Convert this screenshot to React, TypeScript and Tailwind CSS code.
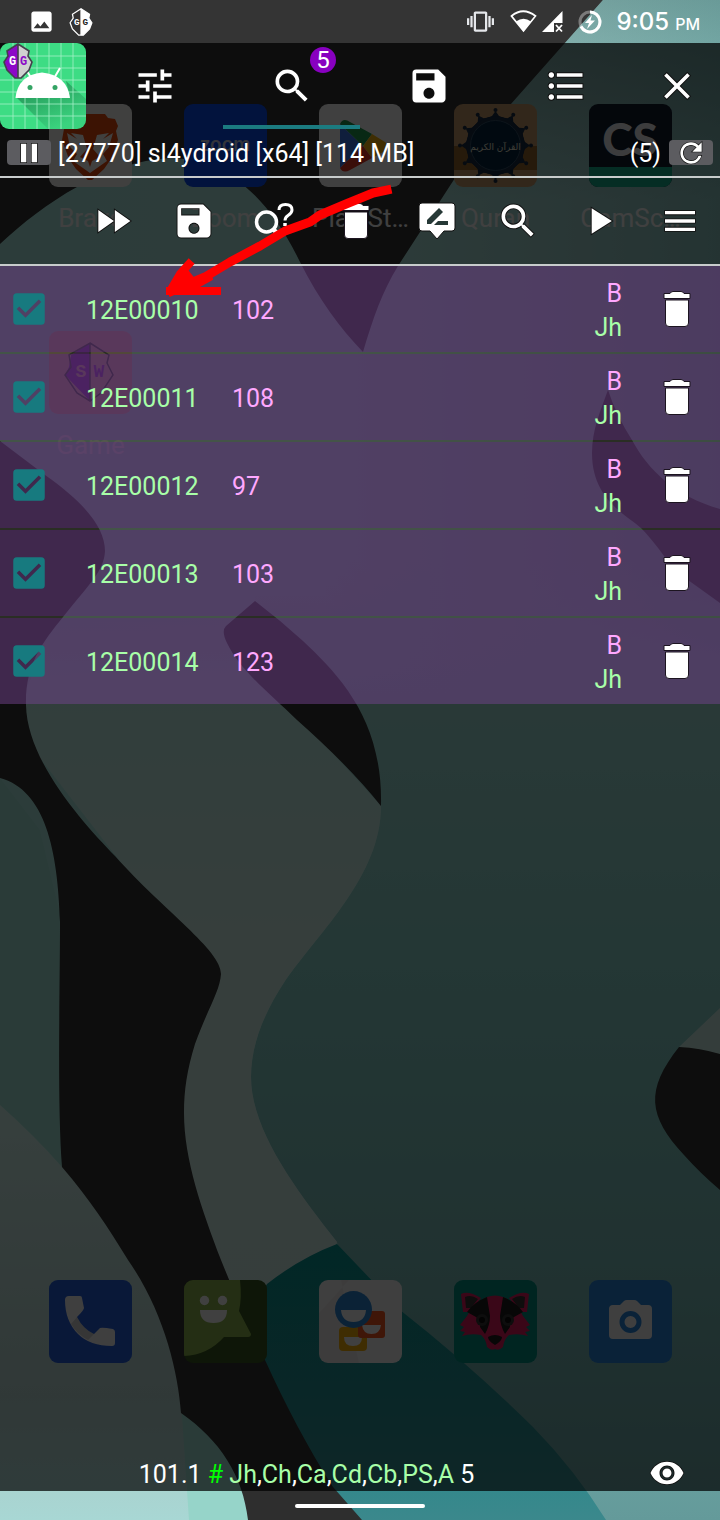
import React from "react";
import type { IconType } from "react-icons";
import {
  MdCheckBox,
  MdClose,
  MdFastForward,
  MdFormatListBulleted,
  MdImage,
  MdMenu,
  MdPause,
  MdPlayArrow,
  MdRefresh,
  MdSave,
  MdSearch,
  MdTune,
  MdVibration,
  MdVisibility,
} from "react-icons/md";

/* ---------- Wallpaper ---------- */

function Wallpaper() {
  return (
    <svg
      className="absolute inset-0 h-full w-full"
      viewBox="0 0 720 1520"
      preserveAspectRatio="none"
      aria-hidden="true"
    >
      <defs>
        <linearGradient id="right" gradientUnits="userSpaceOnUse" x1="0" y1="560" x2="0" y2="1520">
          <stop offset="0" stopColor="#a4e4dc" stopOpacity="0" />
          <stop offset="0.14" stopColor="#a4e4dc" />
          <stop offset="0.45" stopColor="#8cd8d0" />
          <stop offset="0.75" stopColor="#80c4c0" />
          <stop offset="1" stopColor="#70acac" />
        </linearGradient>
        <linearGradient id="mid" gradientUnits="userSpaceOnUse" x1="0" y1="600" x2="0" y2="1330">
          <stop offset="0" stopColor="#c0f8f0" stopOpacity="0" />
          <stop offset="0.14" stopColor="#c4f8f0" />
          <stop offset="0.5" stopColor="#d8f8f0" />
          <stop offset="1" stopColor="#d8f4f0" />
        </linearGradient>
        <linearGradient id="topfield" x1="0" y1="0" x2="1" y2="0">
          <stop offset="0" stopColor="#b0f0e8" />
          <stop offset="0.45" stopColor="#b4f0e8" />
          <stop offset="0.8" stopColor="#a4d8d4" />
          <stop offset="1" stopColor="#90ccc8" />
        </linearGradient>
        <linearGradient id="topshade" x1="0" y1="0" x2="0" y2="1">
          <stop offset="0" stopColor="#305050" stopOpacity="0.4" />
          <stop offset="1" stopColor="#305050" stopOpacity="0" />
        </linearGradient>
        <linearGradient id="lowleft" x1="0" y1="0" x2="0" y2="1">
          <stop offset="0" stopColor="#d8fcf4" />
          <stop offset="0.7" stopColor="#c0e0dc" />
          <stop offset="1" stopColor="#bcf0ec" />
        </linearGradient>
        <linearGradient id="deep" x1="0" y1="0" x2="0" y2="1">
          <stop offset="0" stopColor="#069a98" />
          <stop offset="1" stopColor="#42989c" />
        </linearGradient>
      </defs>
      <rect width="720" height="1520" fill="#343434" />
      <path
        d="M0 244C45 202 105 162 170 158C225 158 268 196 300 262C319 300 340 328 363 352C373 318 382 292 398 266L455 178C474 148 492 126 511 104L603 0H720V1520H0Z"
        fill="url(#topfield)"
      />
      <path d="M603 0H720V200H440L455 178C474 148 492 126 511 104Z" fill="url(#topshade)" />
      <path
        d="M255 560V601C300 636 381 705 381 806C381 875 321 930 285 981C262 1016 251 1047 251 1077C251 1130 296 1190 337 1242L400 1520H720V560Z"
        fill="url(#right)"
      />
      <path
        d="M26 690L63 600H255L317 736L381 806C381 875 321 930 285 981C262 1016 251 1047 251 1077C251 1130 296 1190 337 1242L300 1330H150V900L26 740Z"
        fill="url(#mid)"
      />
      <path d="M0 778L40 830L62 922V1180L0 1110Z" fill="#a8ece0" />
      <path d="M0 1105Q34 1135 62 1167L150 1240L230 1413V1520H0Z" fill="url(#lowleft)" />
      <path d="M181 1400L189 1520H260L220 1400Z" fill="#a8ece0" />
      <path
        d="M337 1244Q300 1258 267 1284L240 1330L320 1520H606Q575 1470 533 1427Q470 1365 400 1310Z"
        fill="url(#deep)"
      />
      <path
        d="M0 441L45 475C85 503 105 528 105 551C104 571 90 583 63 617C42 643 25 665 26 705C27 762 85 825 115 856C165 912 221 950 221 974C220 991 208 1008 195 1044C187 1070 184 1090 184 1113C184 1160 202 1210 221 1260C234 1292 248 1326 265 1360C285 1404 308 1448 333 1487L362 1520H248C243 1476 220 1440 181 1413C178 1370 163 1310 128 1260C108 1227 90 1200 62 1167C57 1100 60 990 60 922C58 850 45 790 0 778Z"
        fill="#343434"
      />
      <path
        d="M255 601L226 626Q221 631 227 643C240 670 268 692 297 720Q350 767 381 806C383 720 340 676 303 641Q280 620 255 601Z"
        fill="#343434"
      />
      <path
        d="M608 390C600 412 592 430 592 453C592 500 627 515 641 528C665 553 670 570 688 580L720 603V509C675 496 648 470 632 440Q616 415 608 390Z"
        fill="#343434"
      />
      <path d="M720 1008L679 1047L720 1056Z" fill="#d0f4ec" />
      <path d="M679 1047C645 1090 648 1116 684 1155Q700 1173 720 1190V1054Q700 1048 679 1047Z" fill="#343434" />
    </svg>
  );
}

/* ---------- Launcher icons ---------- */

function Tile({ bg, children }: { bg: string; children?: React.ReactNode }) {
  return (
    <svg className="size-[83px] shrink-0" viewBox="0 0 83 83" aria-hidden="true">
      <defs>
        <clipPath id={"tile" + bg.slice(1)}>
          <rect width="83" height="83" rx="9" />
        </clipPath>
      </defs>
      <g clipPath={`url(#tile${bg.slice(1)})`}>
        <rect width="83" height="83" fill={bg} />
        {children}
      </g>
    </svg>
  );
}

const BraveIcon = () => (
  <Tile bg="#fdfdfc">
    <path
      d="M26 10H56L59 14L66 15L69 22L67 27L69 36L62 55L55 65L43 76H39L27 65L20 55L13 36L15 25L19 17Z"
      fill="#f04c0c"
    />
    <path
      d="M22 29L34 31L38 45L31 53L39 57L41 63L43 57L51 53L44 45L48 31L60 29L54 35L64 29L60 43L54 50L58 57L41 69L24 57L28 50L21 43L18 29L28 35Z"
      fill="#fdfdfc"
    />
  </Tile>
);

const ZoomIcon = () => (
  <Tile bg="#0a4cf4">
    <text x="41" y="47" textAnchor="middle" fontFamily="Inter, sans-serif" fontWeight="600" fontSize="19" fill="#c8d0e8">
      zoom
    </text>
  </Tile>
);

const PlayStoreIcon = () => (
  <Tile bg="#fefefe">
    <path d="M21 20V64L44 42Z" fill="#3c78f0" />
    <path d="M21 20Q24 13 31 18L53 30L44 42Z" fill="#20a050" />
    <path d="M53 30L66 38Q71 42 66 47L53 54L44 42Z" fill="#fcb80c" />
    <path d="M21 64Q24 70 31 66L53 54L44 42Z" fill="#e83828" />
  </Tile>
);

const QuranIcon = () => (
  <Tile bg="#c89c6c">
    <rect y="42" width="83" height="24" fill="#98682c" />
    {[0, 30, 60, 90, 120, 150, 180, 210, 240, 270, 300, 330].map((a) => (
      <g key={a} transform={`rotate(${a} 41.5 41.5)`}>
        <path d="M30 15L38 12L41.5 7L45 12L53 15L49 24H34Z" fill="#182c44" />
        <circle cx="41.5" cy="6" r="2" fill="#182c44" />
      </g>
    ))}
    <circle cx="41.5" cy="41.5" r="29" fill="#182c44" />
    <circle cx="41.5" cy="41.5" r="25" fill="#042440" stroke="#345068" strokeWidth="1" />
    <text x="41.5" y="46" textAnchor="middle" fontFamily="'DejaVu Sans', sans-serif" fontSize="9" fill="#f0ecd8">
      القرآن الكريم
    </text>
  </Tile>
);

const ScannerIcon = () => (
  <Tile bg="#101c2c">
    <rect y="63" width="83" height="20" fill="#14b490" />
    <text x="41" y="52" textAnchor="middle" fontFamily="Lato, sans-serif" fontWeight="900" fontSize="46" fill="#f0f0f4">
      CS
    </text>
  </Tile>
);

const GuardIcon = () => (
  <Tile bg="#fcb4a4">
    <path d="M41 12L22 24L20 36L16 44L41 70Z" fill="#8804d0" />
    <path
      d="M41 12L60 24L58 32L64 44L52 62L41 70L28 62L16 44L22 36L20 24ZM41 12V70"
      fill="none"
      stroke="#30302c"
      strokeWidth="1.5"
    />
    <text x="32" y="46" textAnchor="middle" fontFamily="'Liberation Mono', monospace" fontWeight="700" fontSize="18" fill="#fcb4a4">
      S
    </text>
    <text x="50" y="46" textAnchor="middle" fontFamily="'Liberation Mono', monospace" fontWeight="700" fontSize="18" fill="#8804d0">
      W
    </text>
  </Tile>
);

const PhoneIcon = () => (
  <Tile bg="#347cfc">
    <rect width="83" height="83" fill="#0c2cac" fillOpacity="0.35" />
    <path
      d="M20 16H31Q33 16 33 18L35 28Q35 30 28 37Q34 49 45 54L51 48Q53 47 64 49Q66 50 66 52V63Q66 66 63 66Q41 66 29 54Q16 41 16 20Q16 16 20 16Z"
      fill="#fcfcfc"
    />
    <path d="M22 44L28 37Q34 49 45 54L39 60Q28 54 22 44Z" fill="#000" fillOpacity="0.15" />
  </Tile>
);

const MessageIcon = () => (
  <Tile bg="#385820">
    <path d="M0 0H56Q58 18 55 31L67 54Q67 57 64 57H40Q24 75 0 76Z" fill="#90b850" />
    <circle cx="20.500" cy="20.500" r="4.700" fill="#fff" />
    <circle cx="38.500" cy="20.500" r="4.700" fill="#fff" />
    <path d="M16 30H43Q43 43 29.500 43Q16 43 16 30Z" fill="#fff" />
  </Tile>
);

const PeopleIcon = () => (
  <Tile bg="#fcfafa">
    <path d="M0 33L30 0H22L40 83H0Z" fill="#000" fillOpacity="0.04" />
    <rect x="20" y="47" width="28" height="24" rx="4" fill="#fcb408" />
    <path d="M25 57H43Q43 66 34 66Q25 66 25 57Z" fill="#fff" />
    <rect x="39" y="31" width="27" height="27" rx="3" fill="#fc5820" />
    <path d="M43 45H62Q61 54 52.500 54Q44 54 43 45Z" fill="#fff" />
    <circle cx="34.500" cy="29.500" r="18.500" fill="#2c88d8" />
    <path d="M22 30H47Q46 42 34.500 42Q23 42 22 30Z" fill="#fff" />
  </Tile>
);

const BadgerIcon = () => (
  <Tile bg="#009484">
    <path d="M7 14Q14 10 27 18L16 32H9Z M75 14Q68 10 55 18L66 32H73Z" fill="#e81c60" />
    <path d="M11 17Q17 14 24 19L17 28H12Z M71 17Q65 14 58 19L65 28H70Z" fill="#383434" />
    <path
      d="M33 17Q41 14 49 17Q64 24 69 36L76 45L72 47L76 51L71 52L74 56Q65 53 55 55Q50 59 49 67Q45 71 41 69Q37 71 33 67Q32 59 27 55Q17 53 8 56L11 52L6 51L10 47L6 45L13 36Q18 24 33 17Z"
      fill="#e81c60"
    />
    <path
      d="M33 17Q20 22 13 32L22 37Q27 40 26 47L31 54Q36 45 36 36Z M49 17Q62 22 69 32L60 37Q55 40 56 47L51 54Q46 45 46 36Z"
      fill="#1c1c1c"
    />
    <circle cx="28" cy="40" r="6" fill="#343434" />
    <circle cx="54" cy="40" r="6" fill="#343434" />
    <circle cx="28" cy="40" r="3" fill="#0c0c0c" />
    <circle cx="54" cy="40" r="3" fill="#0c0c0c" />
    <path d="M34 57Q41 53 48 57Q48 61 41 65Q34 61 34 57Z" fill="#1c1c1c" />
  </Tile>
);

const CameraIcon = () => (
  <Tile bg="#2888e0">
    <path
      d="M24 25H31L35 21Q36 20 38 20H45Q47 20 48 21L52 25H59Q63 25 63 29V55Q63 59 59 59H24Q20 59 20 55V29Q20 25 24 25Z"
      fill="#fcfcfc"
    />
    <circle cx="41.500" cy="42" r="8.500" fill="none" stroke="#2888e0" strokeWidth="5" />
  </Tile>
);

const apps = [
  { label: "Brave", Icon: BraveIcon },
  { label: "Zoom", Icon: ZoomIcon },
  { label: "Play St…", Icon: PlayStoreIcon },
  { label: "Quran", Icon: QuranIcon },
  { label: "CamSc…", Icon: ScannerIcon },
  { label: "Game", Icon: GuardIcon },
];

const dock = [PhoneIcon, MessageIcon, PeopleIcon, BadgerIcon, CameraIcon];

function HomeScreen() {
  return (
    <div className="absolute inset-0 flex flex-col justify-between pt-[104px] pr-[22px] pb-[157px] pl-[23px]">
      <div className="grid grid-cols-5 gap-y-[97px]">
        {apps.map(({ label, Icon }) => (
          <div key={label} className="flex h-[130px] flex-col items-center justify-between">
            <Icon />
            <span className="text-[26px] leading-8 whitespace-nowrap text-white">{label}</span>
          </div>
        ))}
      </div>
      <div className="grid grid-cols-5 justify-items-center">
        {dock.map((Icon, i) => (
          <Icon key={i} />
        ))}
      </div>
    </div>
  );
}

/* ---------- Tool icons ---------- */

const outlined =
  "[stroke-width:0] [&_path:not([fill=none])]:[paint-order:stroke] [&_path:not([fill=none])]:stroke-[#111] [&_path:not([fill=none])]:[stroke-width:1]";

function TrashIcon() {
  return (
    <svg className="h-9 w-7 overflow-visible" viewBox="0 0 28 36" aria-hidden="true">
      <path
        d="M7 2.500Q8 0.500 10 0.500H18Q20 0.500 21 2.500H27V7.500H1V2.500Z M2.500 9H25.500V32Q25.500 35.500 22 35.500H6Q2.500 35.500 2.500 32Z"
        fill="#fff"
        stroke="#1c1420"
        strokeWidth="1"
      />
    </svg>
  );
}

function UnknownSearchIcon() {
  return (
    <svg className="size-10 overflow-visible" viewBox="0 0 40 40" fill="none" stroke="#fff" aria-hidden="true">
      <circle cx="11.500" cy="21" r="10" strokeWidth="3.500" />
      <path d="M18 28L25 35" strokeWidth="4.500" />
      <path d="M24 9Q24 3.500 30.500 3.500Q37 3.500 37 9Q37 12 33 14.500Q30 16.500 30 19.500" strokeWidth="3" />
      <path d="M30 22V25" strokeWidth="3.500" />
    </svg>
  );
}

function EditValueIcon() {
  return (
    <svg className="h-9 w-9 overflow-visible" viewBox="0 0 36 36" aria-hidden="true">
      <path
        d="M3 0H33Q36 0 36 3V25Q36 28 33 28H25L18 36L11 28H3Q0 28 0 25V3Q0 0 3 0Z"
        fill="#fff"
        stroke="#111"
        strokeWidth="1"
      />
      <path d="M8 21V17L20 5L24 9L12 21Z" fill="#263836" />
      <path d="M15 22L19 18H29V22Z" fill="#263836" />
    </svg>
  );
}

function GuardianMark({ tone }: { tone: "mono" | "colour" }) {
  const mono = tone === "mono";
  return (
    <svg className={mono ? "h-7 w-6" : "absolute top-0 left-0.5 h-9 w-8"} viewBox="0 0 30 36" aria-hidden="true">
      <path d="M15 1L4 8L5 13L1 19L4 27L12 35H15Z" fill={mono ? "#343232" : "#8c08c8"} />
      <path d="M15 1L26 8L25 13L29 19L26 27L18 35H15Z" fill={mono ? "#fff" : "#d0d0d0"} />
      <path
        d="M15 1L4 8L5 13L1 19L4 27L12 35H18L26 27L29 19L25 13L26 8ZM15 1V35"
        fill="none"
        stroke={mono ? "#fff" : "#44404c"}
        strokeWidth="1.600"
      />
      <text x="9.500" y="22" textAnchor="middle" fontFamily="'Liberation Mono', monospace" fontWeight="700" fontSize="12" fill="#fff">
        G
      </text>
      <text x="20.500" y="22" textAnchor="middle" fontFamily="'Liberation Mono', monospace" fontWeight="700" fontSize="12" fill={mono ? "#222" : "#8c08c8"}>
        G
      </text>
    </svg>
  );
}

function TargetAppIcon() {
  return (
    <svg className="size-[86px]" viewBox="0 0 86 86" aria-hidden="true">
      <defs>
        <clipPath id="appclip">
          <rect width="86" height="86" rx="9" />
        </clipPath>
        <linearGradient id="shadow" x1="0.2" y1="0.1" x2="0.7" y2="0.9">
          <stop offset="0" stopColor="#1c7c48" stopOpacity="0.7" />
          <stop offset="1" stopColor="#1c7c48" stopOpacity="0.1" />
        </linearGradient>
      </defs>
      <g clipPath="url(#appclip)">
        <rect width="86" height="86" fill="#3ddc84" />
        <path d="M16 54L48 86H86V56L66 38L70 54Z" fill="url(#shadow)" />
        <path
          d="M13 0V86M25 0V86M37 0V86M49 0V86M61 0V86M73 0V86M0 13H86M0 25H86M0 37H86M0 49H86M0 61H86M0 73H86"
          stroke="#a4f0c8"
          strokeWidth="0.800"
        />
        <path d="M27 28L33 38M60 25L53 37" stroke="#fff" strokeWidth="2" />
        <path d="M15.500 55Q18 32 42 29.500Q67 32 70 55Z" fill="#fff" />
        <circle cx="30" cy="44.500" r="2.500" fill="#34a464" />
        <circle cx="55" cy="44.500" r="2.500" fill="#34a464" />
      </g>
    </svg>
  );
}

/* ---------- Status bar ---------- */

function StatusBar() {
  return (
    <header className="relative flex h-[43px] items-center justify-between pr-5 pl-7 text-white">
      <div className="flex items-center gap-3.5">
        <MdImage className="size-[27px]" />
        <GuardianMark tone="mono" />
      </div>
      <div className="flex items-center">
        <MdVibration className="mr-4 size-[27px] text-gray-200" />
        <svg className="mr-1 h-[23px] w-[27px]" viewBox="0 0 27 23" aria-hidden="true">
          <path d="M1.500 6Q13 -3.500 25.500 6L13.500 21Z" fill="none" stroke="#fff" strokeWidth="1.700" />
          <path d="M6 11.500Q13.500 6 21 11.500L13.500 21.500Z" fill="#fff" />
        </svg>
        <svg className="mr-3.5 h-[23px] w-[23px]" viewBox="0 0 23 23" aria-hidden="true">
          <path d="M21.500 1V13H13V22H1Z" fill="#fff" />
          <path d="M15 15L21 21.500M21 15L15 21.500" stroke="#fff" strokeWidth="1.800" />
        </svg>
        <svg className="mr-3.5 size-6" viewBox="0 0 24 24" aria-hidden="true">
          <circle cx="12" cy="12" r="10" fill="none" stroke="#fff" strokeOpacity="0.35" strokeWidth="3" />
          <path d="M12 2A10 10 0 1 1 3 16.500" fill="none" stroke="#fff" strokeWidth="3" />
          <path d="M14 5L7 13H11L9 19L17 10.500H12.500Z" fill="#fff" />
        </svg>
        <p className="flex items-baseline gap-1.5 font-[Inter,sans-serif] font-medium">
          <span className="text-2xl leading-7">9:05</span>
          <span className="text-base">PM</span>
        </p>
      </div>
    </header>
  );
}

/* ---------- Memory editor panel ---------- */

const tabs: { name: string; Icon: IconType }[] = [
  { name: "Settings", Icon: MdTune },
  { name: "Search", Icon: MdSearch },
  { name: "Saved list", Icon: MdSave },
  { name: "Memory editor", Icon: MdFormatListBulleted },
];

function TabBar() {
  return (
    <nav className="flex h-[86px] items-stretch">
      <div className="relative w-[86px] shrink-0">
        <TargetAppIcon />
        <GuardianMark tone="colour" />
      </div>
      {tabs.map(({ name, Icon }) => {
        const active = name === "Search";
        return (
          <button
            key={name}
            type="button"
            aria-label={name}
            className={
              active
                ? "relative flex flex-1 items-center justify-center border-y-4 border-t-transparent border-b-[#1b7b80]"
                : "flex flex-1 items-center justify-center"
            }
          >
            <Icon className={`size-11 ${outlined}`} />
            {active && (
              <span className="absolute top-0 right-6 flex h-[26px] w-[26px] items-center justify-center rounded-full bg-[#8800c0] text-2xl leading-none">
                5
              </span>
            )}
          </button>
        );
      })}
      <button type="button" aria-label="Close" className="flex w-[86px] items-center justify-center">
        <MdClose className={`size-11 ${outlined}`} />
      </button>
    </nav>
  );
}

function ProcessBar() {
  return (
    <div className="flex h-[49px] items-center border-b-2 border-[#c8cccc] px-[7px] text-[25px]">
      <button
        type="button"
        aria-label="Pause process"
        className="flex h-[25px] w-11 items-center justify-center rounded bg-[#5c5c60]"
      >
        <MdPause className={`size-8 ${outlined}`} />
      </button>
      <span className="ml-[7px] flex-1 pt-0.5 whitespace-nowrap">[27770] sl4ydroid [x64] [114 MB]</span>
      <span className="mr-2 pt-0.5">(5)</span>
      <button
        type="button"
        aria-label="Refresh"
        className="flex h-[25px] w-11 items-center justify-center rounded bg-[#5c5c60]"
      >
        <MdRefresh className={`size-8 ${outlined}`} />
      </button>
    </div>
  );
}

const tools: { name: string; icon: React.ReactNode }[] = [
  { name: "Next search", icon: <MdFastForward className={`size-11 ${outlined}`} /> },
  { name: "Save selected", icon: <MdSave className={`size-11 ${outlined}`} /> },
  { name: "Unknown value search", icon: <UnknownSearchIcon /> },
  { name: "Clear results", icon: <TrashIcon /> },
  { name: "Edit values", icon: <EditValueIcon /> },
  { name: "Search value", icon: <MdSearch className={`size-11 ${outlined}`} /> },
  { name: "Run script", icon: <MdPlayArrow className={`size-11 ${outlined}`} /> },
  { name: "Menu", icon: <MdMenu className={`size-10 ${outlined}`} /> },
];

function ToolBar() {
  return (
    <div className="grid h-[88px] grid-cols-8 border-b-2 border-[#c8cccc] pl-[72px]">
      {tools.map(({ name, icon }) => (
        <button key={name} type="button" aria-label={name} className="flex items-center justify-center">
          {icon}
        </button>
      ))}
    </div>
  );
}

const results = [
  { address: "12E00010", value: 102 },
  { address: "12E00011", value: 108 },
  { address: "12E00012", value: 97 },
  { address: "12E00013", value: 103 },
  { address: "12E00014", value: 123 },
];

function ResultRow({ address, value }: { address: string; value: number }) {
  const cell =
    "h-[88px] border-b-2 border-[#a0b480]/20 bg-[#73438d]/50 bg-clip-padding group-last:h-[86px] group-last:border-b-0";
  return (
    <tr className="group">
      <td className={`${cell} w-[86px] py-0 pr-0 pl-2`}>
        <label className="block w-[42px]">
          <input type="checkbox" defaultChecked className="sr-only" aria-label={`Select ${address}`} />
          <MdCheckBox className="size-[42px] text-[#177a7f]" />
        </label>
      </td>
      <td className={`${cell} w-[146px] px-0 pt-1 pb-0 text-[#a8ffa8]`}>{address}</td>
      <td className={`${cell} px-0 pt-1 pb-0 text-[#ffa8ff]`}>{value}</td>
      <td className={`${cell} px-0 pt-1 pb-0 text-right`}>
        <div className="text-[#ffa8ff]">B</div>
        <div className="text-[#a8ffa8]">Jh</div>
      </td>
      <td className={`${cell} w-[98px] py-0 pr-0 pl-3`}>
        <button type="button" aria-label={`Delete ${address}`} className="flex w-full items-center justify-center">
          <TrashIcon />
        </button>
      </td>
    </tr>
  );
}

const regions = ["Jh", "Ch", "Ca", "Cd", "Cb", "PS", "A"];

function Footer() {
  return (
    <footer className="mt-auto flex h-9 items-center">
      <p className="flex-1 pt-1 text-center text-[25px] leading-9 whitespace-nowrap">
        101.1 <span className="text-[#00ff00]">#</span>{" "}
        {regions.map((r, i) => (
          <React.Fragment key={r}>
            {i > 0 && ","}
            <span className="text-[#a8ffa8]">{r}</span>
          </React.Fragment>
        ))}{" "}
        5
      </p>
      <button type="button" aria-label="Toggle visibility" className="flex w-[107px] items-center justify-center">
        <MdVisibility className={`size-9 ${outlined}`} />
      </button>
    </footer>
  );
}

function Arrow() {
  return (
    <svg
      className="pointer-events-none absolute top-[180px] left-[160px] h-[125px] w-[236px]"
      viewBox="0 0 236 125"
      fill="none"
      stroke="#f00"
      strokeLinecap="square"
      strokeLinejoin="round"
      aria-hidden="true"
    >
      <path d="M227 10L213 13L186 24L160 35L150 42L125 51L100 66L70 82L45 97L12 111" strokeWidth="9" />
      <path d="M29 84L20 94L10 111L30 108L48 98M10 111H57" strokeWidth="8" />
      <path d="M12 108L26 92L34 102Z" strokeWidth="6" fill="#f00" />
    </svg>
  );
}

export default function App() {
  return (
    <div className="relative flex min-h-screen flex-col overflow-hidden font-[Roboto,sans-serif]">
      <Wallpaper />
      <HomeScreen />
      <StatusBar />
      <main className="relative flex flex-1 flex-col bg-black/75 text-white">
        <TabBar />
        <ProcessBar />
        <ToolBar />
        <table className="w-full border-separate border-spacing-0 text-[25px] leading-[34px]">
          <tbody>
            {results.map((r) => (
              <ResultRow key={r.address} {...r} />
            ))}
          </tbody>
        </table>
        <Footer />
      </main>
      <div className="relative flex h-[29px] items-center justify-center bg-black/10">
        <span className="h-1 w-[130px] rounded-full bg-white" />
      </div>
      <Arrow />
    </div>
  );
}
